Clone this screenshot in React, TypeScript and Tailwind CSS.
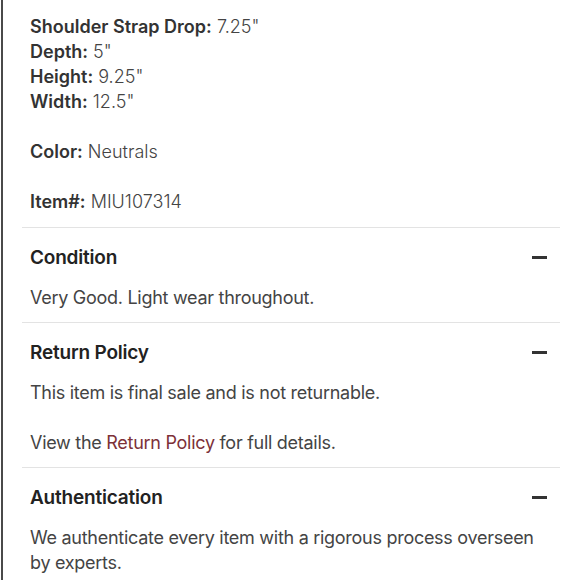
import React from "react";

const specs = [
  { label: "Shoulder Strap Drop:", value: '7.25"' },
  { label: "Depth:", value: '5"' },
  { label: "Height:", value: '9.25"' },
  { label: "Width:", value: '12.5"' },
];

const Minus = () => <span className="block h-[3px] w-[15px] bg-[#333]" />;

const Section: React.FC<{ title: string; children: React.ReactNode }> = ({ title, children }) => (
  <div className="border-t border-[#e3e3e3] pl-2 pr-[13px] pt-[17px] pb-[12px]">
    <div className="flex items-center justify-between">
      <h3 className="text-[19px] leading-[25px] font-semibold tracking-[-0.2px] text-[#222]">{title}</h3>
      <Minus />
    </div>
    <div className="mt-[15px] text-[18px] leading-[25px] tracking-[-0.28px] text-[#444]">{children}</div>
  </div>
);

export default function App() {
  return (
    <div
      className="h-[580px] w-[580px] overflow-hidden bg-white"
      style={{ fontFamily: "Inter, 'Noto Sans', sans-serif" }}
    >
      <div className="ml-[1px] h-full border-l-2 border-[#4a4a4a] pl-[19px] pr-[20px]">
        {/* Details */}
        <div className="pl-2 pt-[14px] pb-[13px] text-[18px] leading-[25px] text-[#444]">
          {specs.map((s) => (
            <p key={s.label}>
              <span className="font-semibold text-[#333]">{s.label}</span>{" "}
              <span className="font-light">{s.value}</span>
            </p>
          ))}
          <p className="mt-[25px]">
            <span className="font-semibold text-[#333]">Color:</span>{" "}
            <span className="font-light">Neutrals</span>
          </p>
          <p className="mt-[25px]">
            <span className="font-semibold text-[#333]">Item#:</span>{" "}
            <span className="font-light">MIU107314</span>
          </p>
        </div>

        <Section title="Condition">
          <p>Very Good. Light wear throughout.</p>
        </Section>

        <Section title="Return Policy">
          <p>This item is final sale and is not returnable.</p>
          <p className="mt-[25px]">
            View the <a className="text-[#7d3138]">Return Policy</a> for full details.
          </p>
        </Section>

        <Section title="Authentication">
          <p>We authenticate every item with a rigorous process overseen by experts.</p>
        </Section>
      </div>
    </div>
  );
}
